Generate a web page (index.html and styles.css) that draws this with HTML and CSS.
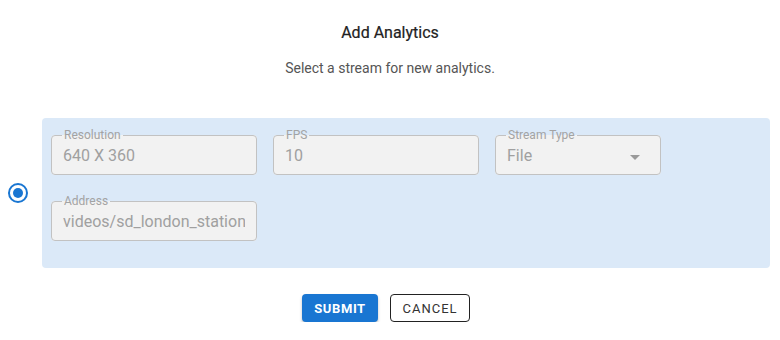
FILE: index.html
```html
<!DOCTYPE html>
<html lang="en">
<head>
    <meta charset="UTF-8">
    <title>Add Analytics</title>
    <link rel="stylesheet" href="styles.css">
</head>
<body>
    <div class="dialog">
        <h2 class="title">Add Analytics</h2>
        <p class="subtitle">Select a stream for new analytics.</p>

        <div class="stream-row">
            <div class="radio-cell">
                <span class="radio checked"></span>
            </div>
            <div class="stream-card">
                <fieldset class="field">
                    <legend>Resolution</legend>
                    <div class="value">640 X 360</div>
                </fieldset>
                <fieldset class="field">
                    <legend>FPS</legend>
                    <div class="value">10</div>
                </fieldset>
                <fieldset class="field select">
                    <legend>Stream Type</legend>
                    <div class="value">File</div>
                    <span class="caret"></span>
                </fieldset>
                <fieldset class="field">
                    <legend>Address</legend>
                    <div class="value">videos/sd_london_station</div>
                </fieldset>
            </div>
        </div>

        <div class="actions">
            <button class="btn btn-primary">Submit</button>
            <button class="btn btn-outline">Cancel</button>
        </div>
    </div>
</body>
</html>
```

FILE: styles.css
```css
* {
    margin: 0;
    padding: 0;
    box-sizing: border-box;
}

body {
    font-family: Roboto, 'Liberation Sans', sans-serif;
    background: #ffffff;
    color: #333;
}

.dialog {
    width: 780px;
}

.title {
    text-align: center;
    font-size: 16px;
    line-height: 24px;
    font-weight: 400;
    color: #222;
    padding-top: 21px;
    -webkit-text-stroke: 0.2px #222;
}

.subtitle {
    text-align: center;
    font-size: 14px;
    line-height: 20px;
    color: #555;
    margin-top: 13px;
}

/* Stream row */
.stream-row {
    display: flex;
    margin-top: 40px;
    padding-right: 10px;
}

.radio-cell {
    width: 42px;
    display: flex;
    align-items: center;
    justify-content: center;
    padding-right: 6px;
}

.radio {
    width: 20px;
    height: 20px;
    border: 2px solid #1976d2;
    border-radius: 50%;
    display: flex;
    align-items: center;
    justify-content: center;
}

.radio.checked::after {
    content: "";
    width: 10px;
    height: 10px;
    border-radius: 50%;
    background: #1976d2;
}

.stream-card {
    flex: 1;
    background: #dbe9f8;
    border-radius: 4px;
    padding: 11px 9px 27px;
    display: grid;
    grid-template-columns: 206px 206px 166px;
    column-gap: 16px;
    row-gap: 20px;
}

/* Outlined fields */
.field {
    position: relative;
    border: 1px solid #c2c2c2;
    border-radius: 4px;
    background: #f2f2f2;
    padding: 0 11px 8px;
    min-width: 0;
}

.field legend {
    font-size: 12px;
    line-height: 12px;
    color: #a3a3a3;
    padding: 0 2px;
    margin-left: -1px;
}

.field .value {
    margin-top: 5px;
    font-size: 16px;
    line-height: 20px;
    color: #a0a0a0;
    white-space: nowrap;
    overflow: hidden;
}

.caret {
    position: absolute;
    right: 20px;
    top: 14px;
    width: 0;
    height: 0;
    border-left: 5px solid transparent;
    border-right: 5px solid transparent;
    border-top: 5px solid #9a9a9a;
}

/* Buttons */
.actions {
    display: flex;
    justify-content: center;
    gap: 12px;
    margin-top: 26px;
    padding-right: 8px;
}

.btn {
    height: 28px;
    font-family: Roboto, 'Liberation Sans', sans-serif;
    font-size: 13px;
    letter-spacing: 1px;
    text-transform: uppercase;
    border-radius: 4px;
    cursor: pointer;
}

.btn-primary {
    width: 76px;
    background: #1976d2;
    color: #fff;
    border: none;
    font-weight: 700;
    letter-spacing: 0.6px;
    box-shadow: 0 2px 3px rgba(0, 0, 0, 0.25);
}

.btn-outline {
    width: 80px;
    background: #fff;
    color: #333;
    border: 1px solid #222;
    font-weight: 400;
}
```
